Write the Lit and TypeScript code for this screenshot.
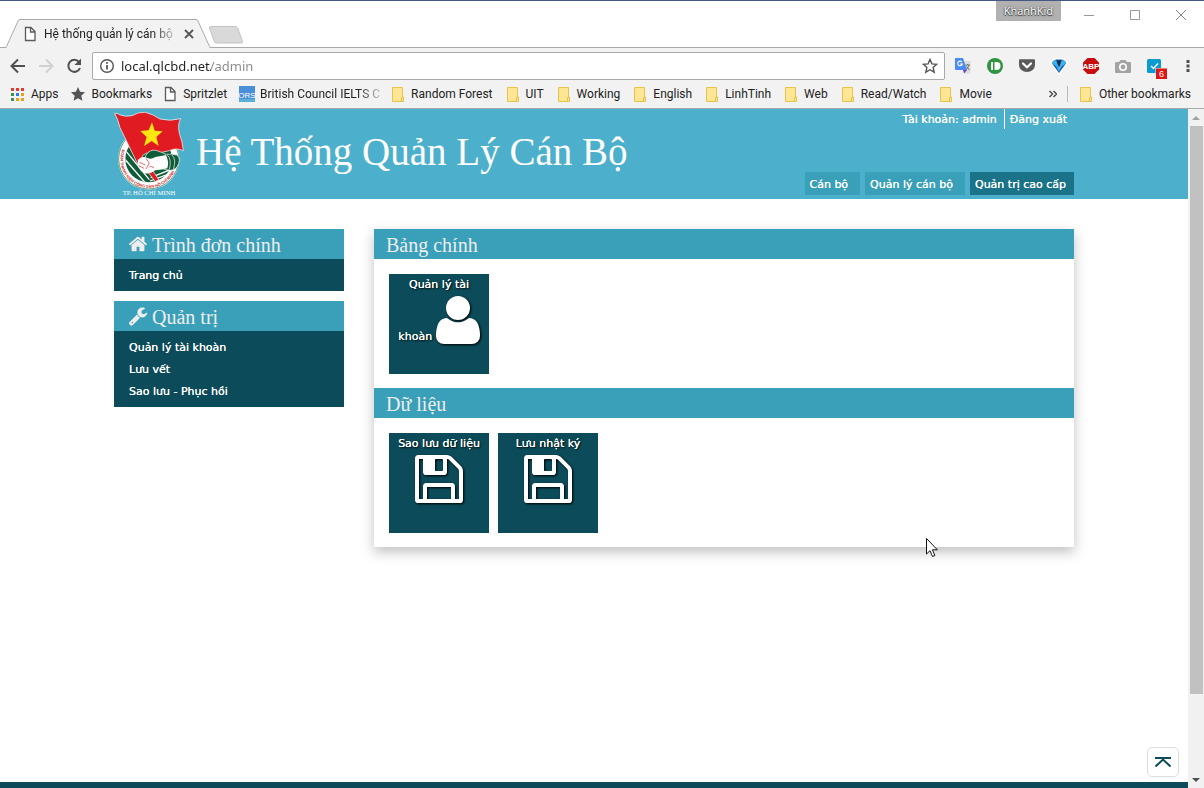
import { LitElement, html, svg, css } from "lit";
import { customElement } from "lit/decorators.js";

const FA = {
  home: "M1472 992v480q0 26-19 45t-45 19h-384v-384h-256v384h-384q-26 0-45-19t-19-45v-480q0-1 .5-3t.5-3l575-474 575 474q1 2 1 6zm223-69l-62 74q-8 9-21 11h-3q-13 0-21-7l-692-577-692 577q-12 8-24 7-13-2-21-11l-62-74q-8-10-7-23.5t11-21.5l719-599q32-26 76-26t76 26l244 204v-195q0-14 9-23t23-9h192q14 0 23 9t9 23v408l219 182q10 8 11 21.5t-7 23.5z",
  wrench: "M448 1472q0-26-19-45t-45-19-45 19-19 45 19 45 45 19 45-19 19-45zm644-420l-682 682q-37 37-90 37-52 0-91-37l-106-108q-38-36-38-90 0-53 38-91l681-681q39 98 114.5 173.5t173.5 114.5zm634-435q0 39-23 106-47 134-164.5 217.5t-258.500 83.500q-185 0-316.500-131.500t-131.500-316.500 131.500-316.500 316.500-131.500q58 0 121.500 16.500t107.500 46.500q16 11 16 28t-16 28l-293 169v224l193 107q5-3 79-48.500t135.500-81 70.500-35.500q15 0 23.500 10t8.500 25z",
  floppy: "M512 1536h768v-384h-768v384zm896 0h128v-896q0-14-10-38.5t-20-34.5l-281-281q-10-10-34-20t-39-10v416q0 40-28 68t-68 28h-576q-40 0-68-28t-28-68v-416h-128v1280h128v-416q0-40 28-68t68-28h832q40 0 68 28t28 68v416zm-384-928v-320q0-13-9.500-22.500t-22.500-9.500h-192q-13 0-22.500 9.500t-9.500 22.500v320q0 13 9.500 22.500t22.500 9.500h192q13 0 22.500-9.500t9.500-22.500zm640 32v928q0 40-28 68t-68 28h-1344q-40 0-68-28t-28-68v-1344q0-40 28-68t68-28h928q40 0 88 20t76 48l280 280q28 28 48 76t20 88z",
  user: "M1600 1405q0 120-73 189.500t-194 69.500h-874q-121 0-194-69.500t-73-189.500q0-53 3.500-103.500t14-109 26.500-108.500 43-97.500 62-81 85.500-53.500 111.500-20q9 0 42 21.500t74.500 48 108 48 133.500 21.500 133.500-21.500 108-48 74.500-48 42-21.500q61 0 111.500 20t85.500 53.500 62 81 43 97.500 26.500 108.500 14 109 3.500 103.500zm-320-893q0 159-112.500 271.500t-271.500 112.500-271.500-112.500-112.500-271.500 112.500-271.500 271.500-112.500 271.500 112.500 112.500 271.500z",
};

const pageIcon = html`<svg width="12" height="16" viewBox="0 0 12 16" aria-hidden="true"><path d="M1.500 1.500h5.500l4 4v9h-9.500zM6.500 1.500v4.500h4.500" fill="#fff" stroke="#5a5a5a" stroke-width="1.300"/></svg>`;
const folderIcon = html`<svg width="12" height="15" viewBox="0 0 12 15" aria-hidden="true"><path d="M.5.500h10v9.500h1v4.500h-11z" fill="#ffe694" stroke="#e9c24a"/><path d="M9.500 14v-3.500h1.500" fill="none" stroke="#e9c24a"/></svg>`;

@customElement("browser-chrome")
class BrowserChrome extends LitElement {
  static styles = css`
    :host { display: block; font: 12px/16px Roboto, sans-serif; color: #222; background: #fff; border-top: 1px solid #465781; }
    button { all: unset; box-sizing: border-box; display: flex; align-items: center; justify-content: center; }
    svg { display: block; flex: none; }
    .strip { display: flex; align-items: flex-end; height: 46px; border-bottom: 1px solid #a9a9a9; }
    .tab { position: relative; display: flex; align-items: center; box-sizing: border-box; width: 206px; height: 29px; margin: 0 0 -1px 5px; padding: 0 17px 0 19px; }
    .tab-shape { position: absolute; inset: 0; }
    .tab > *:not(.tab-shape) { position: relative; }
    .tab-title { flex: 1; margin: 0 2px 0 8px; white-space: nowrap; mask-image: linear-gradient(to right, #000 108px, transparent 136px); }
    .new-tab { align-self: flex-end; margin: 0 0 3px -3px; }
    .window { display: flex; align-self: flex-start; margin-left: auto; }
    .profile { height: 20px; padding: 0 8px; background: #b1b1b1; color: #fff; font: 11px/20px "Open Sans", sans-serif; text-shadow: 0 0 2px #333, 0 1px 1px #333; }
    .win { width: 46px; height: 28px; }
    .min { margin-left: 5px; }
    .bar { display: flex; align-items: center; height: 36px; padding: 0 14px 0 9px; background: #f2f2f2; }
    .nav { display: flex; gap: 10px; width: 83px; }
    .address { display: flex; align-items: center; flex: 1; height: 28px; box-sizing: border-box; padding: 0 6px; border: 1px solid #a9a9a9; border-radius: 2px; background: #fff; }
    .address input { flex: 1; min-width: 0; border: 0; outline: 0; padding: 0; margin-left: 6px; height: 24px; font: 13px "Noto Sans", sans-serif; color: transparent; background: linear-gradient(to right, #222 90px, #888 90px); background-clip: text; -webkit-background-clip: text; }
    .ext { display: flex; align-items: center; gap: 12px; margin-left: 8px; }
    .ext button { width: 20px; height: 20px; }
    .menu { width: 4px; margin-left: 21px; }
    .marks { display: flex; align-items: center; height: 20px; padding: 0 13px 4px 10px; background: #f2f2f2; border-bottom: 1px solid #a9a9a9; white-space: nowrap; }
    .marks a { display: flex; align-items: center; gap: 7px; color: inherit; text-decoration: none; margin-right: 14px; }
    .marks .site { margin-right: 12px; }
    .marks .fade { gap: 5px; }
    .marks .fade span { mask-image: linear-gradient(to right, #000 98px, transparent 126px); }
    .marks .more { margin-left: auto; margin-right: 10px; }
    .marks .other { border-left: 1px solid #bbb; padding-left: 12px; margin-right: 0; }
  `;

  private folders = ["Random Forest", "UIT", "Working", "English", "LinhTinh", "Web", "Read/Watch", "Movie"];
  private appColors = ["#e03c31", "#e03c31", "#e03c31", "#3a8f57", "#2f7de1", "#e8a417", "#3a8f57", "#e8a417", "#e8a417"];

  render() {
    return html`
      <div class="strip">
        <div class="tab">
          <svg class="tab-shape" width="206" height="29" viewBox="0 0 206 29"><path d="M0 29L1.500 28.500 13 2q.6-1.500 2-1.500h176q1.400 0 2 1.500l11.500 26.500L206 29z" fill="#f2f2f2"/><path d="M0 28.500q1 0 1.500-1L13 2q.6-1.500 2-1.500h176q1.400 0 2 1.500l11.500 25.500q.5 1 1.500 1" fill="none" stroke="#a9a9a9"/></svg>
          ${pageIcon}
          <span class="tab-title">Hệ thống quản lý cán bộ</span>
          <button aria-label="Close tab"><svg width="10" height="10" viewBox="0 0 10 10"><path d="M1 1l8 8M9 1l-8 8" stroke="#555" stroke-width="1.800"/></svg></button>
        </div>
        <button class="new-tab" aria-label="New tab"><svg width="36" height="18" viewBox="0 0 36 18"><path d="M2.500.500h25q1.500 0 2 1l5 14q.5 1.500-1 1.500h-25q-1.500 0-2-1l-5-14q-.5-1.500 1-1.500z" fill="#d9d9d9" stroke="#c2c2c2"/></svg></button>
        <div class="window">
          <button class="profile">KhanhKid</button>
          <button class="win min" aria-label="Minimize"><svg width="10" height="10"><path d="M0 5.500h10" stroke="#999"/></svg></button>
          <button class="win" aria-label="Maximize"><svg width="10" height="10"><path d="M.5.500h9v9h-9z" fill="none" stroke="#999"/></svg></button>
          <button class="win" aria-label="Close"><svg width="10" height="10"><path d="M0 0l10 10M10 0L0 10" stroke="#888"/></svg></button>
        </div>
      </div>
      <div class="bar">
        <div class="nav">
          <button aria-label="Back"><svg width="18" height="18" viewBox="0 0 18 18"><path d="M16 9H3M9 2.500L2.500 9 9 15.500" fill="none" stroke="#505050" stroke-width="2"/></svg></button>
          <button aria-label="Forward"><svg width="18" height="18" viewBox="0 0 18 18"><path d="M2 9h13M9 2.500L15.500 9 9 15.500" fill="none" stroke="#d0d0d0" stroke-width="2"/></svg></button>
          <button aria-label="Reload"><svg width="18" height="18" viewBox="0 0 18 18"><path d="M14 5A6 6 0 1 0 15 11" fill="none" stroke="#505050" stroke-width="2"/><path d="M16 1.500v6.500H9.500z" fill="#505050"/></svg></button>
        </div>
        <div class="address">
          <svg width="16" height="16" viewBox="0 0 16 16"><circle cx="8" cy="8" r="6.300" fill="none" stroke="#555" stroke-width="1.400"/><path d="M8 7v4.500M8 4v1.800" stroke="#555" stroke-width="1.800"/></svg>
          <input aria-label="Address" value="local.qlcbd.net/admin" />
          <button aria-label="Bookmark this page"><svg width="16" height="16" viewBox="0 0 16 16"><path d="M8 1.500l1.900 4.400 4.800.4-3.600 3.200 1.100 4.700L8 11.700l-4.200 2.500 1.100-4.700L1.300 6.300l4.800-.4z" fill="none" stroke="#555" stroke-width="1.400"/></svg></button>
        </div>
        <div class="ext">
          <button aria-label="Translate"><svg width="18" height="18" viewBox="0 0 18 18"><path d="M7 4h9.500v12.500H10z" fill="#dcdcdc"/><path d="M1 1h8l4 12H2q-1 0-1-1z" fill="#4a8af4"/><path d="M9 13h4l-3 3.500z" fill="#7a3fc0"/><path d="M8 5.200A2.300 2.300 0 1 0 8.300 7H6" fill="none" stroke="#fff" stroke-width="1.100"/><path d="M11.500 8h4.500M13.700 7v1M15 8q-1 3-3 5M12.500 9.500l3 3.500" stroke="#777" fill="none"/></svg></button>
          <button aria-label="Pushbullet"><svg width="18" height="18" viewBox="0 0 18 18"><circle cx="9" cy="9" r="8" fill="#2f9440"/><path d="M6 5v8" stroke="#fff" stroke-width="2"/><path d="M8.500 5h2a4 4 0 0 1 0 8h-2z" fill="#fff"/></svg></button>
          <button aria-label="Pocket"><svg width="18" height="18" viewBox="0 0 18 18"><path d="M1 3q0-.8.8-.8h14.400q.8 0 .8.800v5a8 7 0 0 1-16 0z" fill="#5a5a5a"/><path d="M5 6.500l4 3.800 4-3.800" fill="none" stroke="#fff" stroke-width="2.200" stroke-linecap="round"/></svg></button>
          <button aria-label="Vector"><svg width="18" height="18" viewBox="0 0 18 18"><path d="M4 1h10l4 5-9 12L0 6z" fill="#fff"/><path d="M3 4l3-1.500h6L15 4l1 2.500L9 16 2 6.500z" fill="#1b5faf"/><path d="M3 4l3-1 1.500 4.500L9 10l3-7 3 1 1 2.500-4.500 3L9 15l-2.500-5.500-4.500-3z" fill="#3fb2e6"/><path d="M6.500 3.500h5L9 10z" fill="#0d2f60"/></svg></button>
          <button aria-label="Adblock Plus"><svg width="18" height="18" viewBox="0 0 18 18"><path d="M5.500 1h7L17 5.500v7L12.500 17h-7L1 12.500v-7z" fill="#c70d0d"/><text x="9" y="12" text-anchor="middle" font-family="Liberation Sans Narrow, Liberation Sans" font-weight="700" font-size="8" fill="#fff">ABP</text></svg></button>
          <button aria-label="Screenshot"><svg width="18" height="18" viewBox="0 0 18 18"><path d="M2 5h3l1.500-2h5L13 5h3q1 0 1 1v9q0 1-1 1H2q-1 0-1-1V6q0-1 1-1z" fill="#a3a3a3"/><circle cx="9" cy="10" r="4" fill="#fff"/><circle cx="9" cy="10" r="2.400" fill="#a3a3a3"/></svg></button>
          <button aria-label="Tasks"><svg width="24" height="26" viewBox="0 0 24 26"><rect x="4" y="6" width="14" height="14" rx="1.500" fill="#0a9bd3"/><path d="M8 13l2.500 2.500L15 10.500" fill="none" stroke="#fff" stroke-width="1.500"/><rect x="12.500" y="15" width="11.500" height="11" fill="#f2f2f2"/><rect x="13" y="15.500" width="11" height="10.500" fill="#e01515"/><text x="18.500" y="24" text-anchor="middle" font-family="Liberation Sans" font-size="9" fill="#fff">6</text></svg></button>
        </div>
        <button class="menu" aria-label="Menu"><svg width="4" height="14" viewBox="0 0 4 14"><path d="M.5 1h3v3h-3zM.5 5.500h3v3h-3zM.5 10h3v3h-3z" fill="#505050"/></svg></button>
      </div>
      <nav class="marks">
        <a href="#" class="site"><svg width="14" height="14" viewBox="0 0 14 14">${this.appColors.map((c, i) => svg`<rect x=${(i % 3) * 5 + 1} y=${Math.floor(i / 3) * 5 + 1} width="3" height="3" fill=${c}></rect>`)}</svg><span>Apps</span></a>
        <a href="#" class="site"><svg width="14" height="14" viewBox="0 0 14 14"><path d="M7 0l2.100 4.800 4.900.5-3.700 3.400 1.100 5.100L7 11.200l-4.400 2.600 1.100-5.100L0 5.300l4.900-.5z" fill="#555"/></svg><span>Bookmarks</span></a>
        <a href="#" class="site">${pageIcon}<span>Spritzlet</span></a>
        <a href="#" class="site fade"><svg width="16" height="16" viewBox="0 0 16 16"><rect width="16" height="16" fill="#4a90d9"/><rect y="13" width="16" height="3" fill="#56b0d8"/><text x="8" y="12" text-anchor="middle" font-family="Liberation Sans Narrow, Liberation Sans" font-size="8" fill="#fff">ORS</text></svg><span>British Council IELTS C</span></a>
        ${this.folders.map((f) => html`<a href="#">${folderIcon}<span>${f}</span></a>`)}
        <button class="more" aria-label="More bookmarks"><svg width="8" height="8" viewBox="0 0 8 8"><path d="M.5 1l3 3-3 3M4.500 1l3 3-3 3" fill="none" stroke="#444" stroke-width="1.400"/></svg></button>
        <a href="#" class="other">${folderIcon}<span>Other bookmarks</span></a>
      </nav>
    `;
  }
}

@customElement("union-emblem")
class UnionEmblem extends LitElement {
  static styles = css`:host { display: block; text-shadow: none; } svg { display: block; }`;
  render() {
    return html`<svg width="70" height="86" viewBox="12 6 210 258" role="img" aria-label="TP. Hồ Chí Minh">
      <defs><path id="ring" d="M37 121A84 84 0 1 0 196 182L201 160" /><clipPath id="disc"><circle cx="116" cy="150" r="70"/></clipPath></defs>
      <circle cx="116" cy="150" r="92" fill="#fff"/>
      <circle cx="116" cy="150" r="90" fill="none" stroke="#1d6b42" stroke-width="2"/>
      <circle cx="116" cy="150" r="70" fill="#0f5c38"/>
      <g clip-path="url(#disc)" stroke="#fff" stroke-width="4" fill="none"><path d="M44 122l74 90M58 112l74 90M44 150l66 76M196 176l-74 30M190 190l-70 26"/></g>
      <text font-family="Liberation Sans" font-size="12" font-weight="700" fill="#d2232a"><textPath href="#ring">ĐOÀN THANH NIÊN CỘNG SẢN HỒ CHÍ MINH</textPath></text>
      <path d="M100 172l14-10 32 50-10 6z" fill="#e11b22" stroke="#fff" stroke-width="2"/>
      <path d="M14 13q8-2 14 4 18 8 38 3 20-12 40-10 24 6 44 20 30 8 62-1-10 16-4 44 10 26 12 52-22-10-42 0-26 8-50 6-20-2-30 8l-6 22-10 2L30 56Q24 30 14 13z" fill="#e11b22" stroke="#fff" stroke-width="2"/>
      <path d="M126 40l8 25 24 2-19 17 7 27-21-15-23 15 8-27-19-18 25-2z" fill="#ffe612"/>
      <path d="M108 138q12-18 30-14 18 6 30 12 18-2 32 2 12 8 6 26-8 20-26 20l-30-6-46-26z" fill="#0f5c38" stroke="#fff" stroke-width="2"/>
      <path d="M172 138q14 12 6 44M186 138q14 14 4 42" fill="none" stroke="#fff" stroke-width="2"/>
      <path d="M84 152q12-14 30-4 10 4 22-4l32-6q10 20 4 40-18 4-36 6-18 14-34 8-24-14-18-40z" fill="#fff"/>
      <path d="M88 160l18 8M86 170l16 8M108 148l10 14-10 18M132 176q-8-6-14-2" fill="none" stroke="#d2232a" stroke-width="2"/>
      <text x="117" y="257" text-anchor="middle" font-family="Liberation Serif" font-size="20" fill="#fff">TP. HỒ CHÍ MINH</text>
    </svg>`;
  }
}

@customElement("app-root")
class AppRoot extends LitElement {
  static styles = css`
    :host { display: flex; flex-direction: column; min-height: 100vh; background: #fff; font: 11px/18px "DejaVu Sans", sans-serif; color: #fff; text-shadow: 0 0 0 currentColor; }
    a { color: inherit; text-decoration: none; }
    browser-chrome { text-shadow: none; }
    h1, h2 { margin: 0; font-family: "Liberation Serif", serif; font-weight: 400; text-shadow: none; }
    ul { list-style: none; margin: 0; padding: 0; }
    button { all: unset; box-sizing: border-box; }
    .view { display: flex; flex: 1; }
    .page { position: relative; display: flex; flex-direction: column; flex: 1; min-width: 0; }
    .wrap { width: 100%; max-width: 960px; margin: 0 auto; }
    .top { background: #4cb0cc; }
    .top .wrap { display: flex; height: 90px; }
    .logo { margin-top: 2px; }
    .top h1 { margin-left: 12px; font-size: 39px; line-height: 86px; }
    .right { display: flex; flex-direction: column; align-items: flex-end; justify-content: space-between; margin-left: auto; padding-bottom: 4px; }
    .account { display: flex; }
    .account > * { padding: 2px 7px 0 5px; }
    .account a { border-left: 1px solid #fff; }
    .tabs { display: flex; gap: 5px; }
    .tabs a { padding: 2px 12px 0 5px; line-height: 21px; background: #3a9fb9; }
    .tabs .on { padding-right: 8px; background: #1a7388; }
    .content { display: flex; align-items: flex-start; gap: 30px; padding-top: 30px; }
    .side { display: flex; flex-direction: column; gap: 10px; width: 230px; }
    h2 { display: flex; align-items: center; gap: 4px; padding: 2px 12px 0; background: #3a9fb9; color: #eee; font-size: 20px; line-height: 28px; }
    .side h2 { padding: 2px 14px 0; }
    .side h2 svg { margin-top: -2px; }
    .side ul { padding: 6px 15px 4px; background: #0c4b59; line-height: 22px; }
    .board { flex: 1; box-shadow: 0 5px 12px rgba(0, 0, 0, 0.25); }
    .tiles { display: flex; flex-wrap: wrap; gap: 9px; padding: 15px 15px 14px; }
    .tile { box-sizing: border-box; width: 100px; height: 100px; padding: 4px 5px 0; background: #0c4b59; line-height: 14px; text-align: center; text-shadow: 0 0 0 currentColor, 1px 1px 2px #000; }
    .tile svg { vertical-align: -8px; filter: drop-shadow(1px 1px 1px #000); }
    .foot { height: 6px; margin-top: auto; background: #0c4b59; }
    .to-top { position: absolute; right: 9px; bottom: 11px; display: flex; align-items: center; justify-content: center; width: 32px; height: 30px; border: 1px solid #ddd; border-radius: 5px; background: #fff; }
    .cursor { position: absolute; left: 926px; top: 429px; }
    .scroll { display: flex; flex-direction: column; width: 16px; background: #f1f1f1; }
    .scroll button { display: flex; align-items: center; justify-content: center; height: 17px; }
    .track { display: grid; grid-template-rows: 88% 12%; flex: 1; padding: 0 1px 0 2px; }
    .thumb { background: #c1c1c1; }
  `;

  private icon(d: string, size: number, box = "0 0 1792 1792", width = size) {
    return html`<svg width=${width} height=${size} viewBox=${box} fill="currentColor" aria-hidden="true"><path d=${d}></path></svg>`;
  }

  private menu(title: string, icon: string, items: string[]) {
    return html`<section>
      <h2>${this.icon(icon, 20)}<span>${title}</span></h2>
      <ul>${items.map((t) => html`<li><a href="#">${t}</a></li>`)}</ul>
    </section>`;
  }

  render() {
    return html`
      <browser-chrome></browser-chrome>
      <div class="view">
        <div class="page">
          <header class="top">
            <div class="wrap">
              <union-emblem class="logo"></union-emblem>
              <h1>Hệ Thống Quản Lý Cán Bộ</h1>
              <div class="right">
                <div class="account"><span>Tài khoản: admin</span><a href="#">Đăng xuất</a></div>
                <nav class="tabs"><a href="#">Cán bộ</a><a href="#">Quản lý cán bộ</a><a href="#" class="on">Quản trị cao cấp</a></nav>
              </div>
            </div>
          </header>
          <main class="wrap content">
            <aside class="side">
              ${this.menu("Trình đơn chính", FA.home, ["Trang chủ"])}
              ${this.menu("Quản trị", FA.wrench, ["Quản lý tài khoàn", "Lưu vết", "Sao lưu - Phục hồi"])}
            </aside>
            <div class="board">
              <h2>Bảng chính</h2>
              <div class="tiles">
                <a href="#" class="tile">Quản lý tài khoàn ${this.icon(FA.user, 56, "192 0 1408 1792", 44)}</a>
              </div>
              <h2>Dữ liệu</h2>
              <div class="tiles">
                <a href="#" class="tile">Sao lưu dữ liệu ${this.icon(FA.floppy, 56)}</a>
                <a href="#" class="tile">Lưu nhật ký ${this.icon(FA.floppy, 56)}</a>
              </div>
            </div>
          </main>
          <footer class="foot"></footer>
          <button class="to-top" aria-label="Back to top"><svg width="16" height="10" viewBox="0 0 16 10"><path d="M0 1h16M.5 9.500L8 2.500 15.500 9.500" fill="none" stroke="#0c4b59" stroke-width="2"/></svg></button>
          <svg class="cursor" width="13" height="20" viewBox="0 0 13 20"><path d="M.5.500v15.500l3.500-3.300 2.500 5.800 2.400-1-2.500-5.700h5z" fill="#fff" stroke="#111"/></svg>
        </div>
        <div class="scroll">
          <button aria-label="Scroll up"><svg width="8" height="4"><path d="M0 4l4-4 4 4z" fill="#a3a3a3"/></svg></button>
          <div class="track"><div class="thumb"></div></div>
          <button aria-label="Scroll down"><svg width="8" height="4"><path d="M0 0l4 4 4-4z" fill="#505050"/></svg></button>
        </div>
      </div>
    `;
  }
}
